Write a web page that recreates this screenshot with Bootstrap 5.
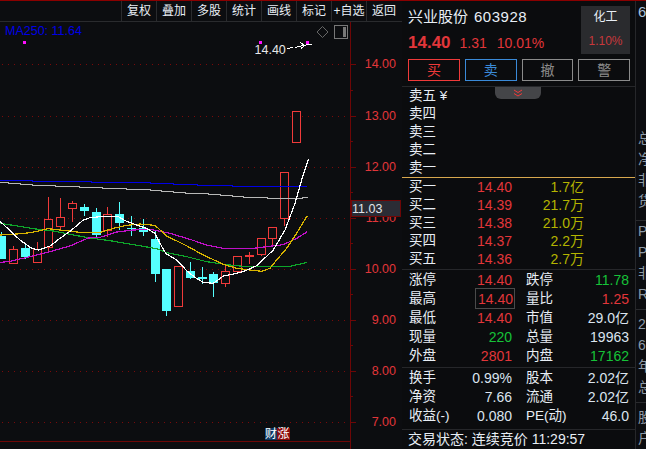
<!DOCTYPE html>
<html lang="zh">
<head>
<meta charset="utf-8">
<title>兴业股份</title>
<link href="https://cdn.jsdelivr.net/npm/bootstrap@5.3.0/dist/css/bootstrap.min.css" rel="stylesheet">
<style>
html,body{height:449px;overflow:hidden;background:#0c0d10;}
body{font-family:"Liberation Sans","Noto Sans CJK SC",sans-serif;font-size:14px;color:#e8eef5;line-height:1;}
.shell{width:646px;height:449px;border-top:1px solid #8b0000;}
.chart-col{width:402px;flex:none;}
.tool-strip{height:21px;border-bottom:1px solid #2a2b2e;padding-right:1px;}
.tool-cell{width:35px;height:20px;flex:none;border-left:1px solid #2a2b2e;color:#e8eef5;font-size:12px;white-space:nowrap;}
.canvas-box{height:427px;}
.canvas-box svg{display:block;}
.axis-txt{font-family:"Liberation Sans",sans-serif;font-size:12.5px;fill:#e2363a;}
.quote{width:234px;flex:none;border-right:1px solid #26272a;background:#0b0c0e;height:448px;}
.q-head{height:85px;padding:5px 5px 0 6px;}
.q-name{font-size:15px;margin-top:3px;height:16px;white-space:nowrap;}
.q-name b{font-weight:400;font-size:15px;margin-left:6px;letter-spacing:.5px;}
.q-price{margin-top:9px;height:18px;color:#e2363a;font-size:14px;white-space:nowrap;}
.q-price b{font-size:17px;font-weight:700;margin-right:9px;}
.q-price span{margin-right:10px;}
.sector{width:49px;height:48px;background:#2a2b2e;margin-left:auto;font-size:12px;padding-top:5px;}
.sector .pct{color:#c8383c;font-size:12px;margin-top:12px;}
.act-row{gap:5px;margin-top:5px;}
.act-btn{width:52px;height:22px;padding:0;border-radius:0;font-size:14px;line-height:18px;background:transparent;border:1px solid #8b8b8b;color:#8b8b8b;}
.act-btn.buy{border-color:#f03a3a;color:#f03a3a;}
.act-btn.sell{border-color:#3a8ad8;color:#3a8ad8;}
.rule-top{border-top:1px solid #26272a;}
.sell-block{height:92px;border-bottom:1px solid #d8a84e;font-size:13.5px;}
.pull-tab{position:absolute;left:93px;top:0;width:46px;height:12px;background:#444548;border-radius:0 0 6px 6px;}
.r18{height:18px;padding-left:7px;white-space:nowrap;}
.r19{height:19px;padding-left:7px;white-space:nowrap;}
.buy-block{height:91px;}
.st-block{height:98px;padding-bottom:2px;}
.ex-block{height:62px;}
.px{width:103px;flex:none;}
.px>span:first-child{font-size:13.5px;}
.vol{width:72px;text-align:right;color:#b4b400;flex:none;}
.second{margin-left:14px;}
.t-red{color:#e2363a;}
.t-green{color:#16c238;}
.t-plain{color:#dbe4ee;}
.hi-box{outline:1px solid #4a4a4a;padding:3px 1px 2px 2px;margin:-3px -2px -2px 0;}
.status{height:18px;padding:2px 0 0 6px;font-size:14px;white-space:nowrap;color:#e8eef5;}
.edge{width:10px;flex:none;overflow:hidden;color:#8c99a6;font-size:14px;padding-left:2px;}
.edge div{height:21px;line-height:21px;white-space:nowrap;}
.edge .lead-6{color:#a8c0d8;margin-bottom:106px;font-size:15px;}
.edge hr{margin:0;height:0;border:0;border-top:1px solid #2a2b2e;opacity:1;margin-left:-2px;}
.tag-pair{left:265px;top:406px;}
.tag-cai,.tag-zhang{font-size:12px;height:12px;}
.tag-cai{width:12px;background:#0f3a66;}
.tag-zhang{width:13px;background:#8b0b0b;}
</style>
</head>
<body>
<div class="shell d-flex">
  <div class="chart-col d-flex flex-column">
    <div class="tool-strip d-flex justify-content-end">
      <div class="tool-cell d-flex align-items-center justify-content-center">复权</div>
      <div class="tool-cell d-flex align-items-center justify-content-center">叠加</div>
      <div class="tool-cell d-flex align-items-center justify-content-center">多股</div>
      <div class="tool-cell d-flex align-items-center justify-content-center">统计</div>
      <div class="tool-cell d-flex align-items-center justify-content-center">画线</div>
      <div class="tool-cell d-flex align-items-center justify-content-center">标记</div>
      <div class="tool-cell d-flex align-items-center justify-content-center">+自选</div>
      <div class="tool-cell d-flex align-items-center justify-content-center">返回</div>
    </div>
    <div class="canvas-box position-relative">
      <svg width="402" height="427" viewBox="0 22 402 427" xmlns="http://www.w3.org/2000/svg">
        <g stroke="#7a0a0a" stroke-dasharray="1 5" shape-rendering="crispEdges">
          <path d="M2 64.5H350M2 116.5H350M2 167.5H350M2 218.5H350M2 269.5H350M2 320.5H350M2 371.5H350M2 422.5H350"/>
        </g>
        <g stroke="#6e0606" fill="none" shape-rendering="crispEdges">
          <path d="M350.5 22V449M0 441.5H350"/>
          <path d="M350 64.5H356M350 116.5H356M350 167.5H356M350 218.5H356M350 269.5H356M350 320.5H356M350 371.5H356M350 422.5H356"/>
          <path d="M350 90.5H353M350 141.5H353M350 192.5H353M350 243.5H353M350 294.5H353M350 345.5H353M350 396.5H353"/>
        </g>
        <text class="axis-txt" x="396" y="68" text-anchor="end">14.00</text>
        <text class="axis-txt" x="396" y="120" text-anchor="end">13.00</text>
        <text class="axis-txt" x="396" y="171" text-anchor="end">12.00</text>
        <text class="axis-txt" x="396" y="222" text-anchor="end">11.00</text>
        <text class="axis-txt" x="396" y="273" text-anchor="end">10.00</text>
        <text class="axis-txt" x="396" y="324" text-anchor="end">9.00</text>
        <text class="axis-txt" x="396" y="375" text-anchor="end">8.00</text>
        <text class="axis-txt" x="396" y="426" text-anchor="end">7.00</text>
        <rect x="351.5" y="200.5" width="49" height="16" fill="#2b2c35" stroke="#6e0606" shape-rendering="crispEdges"/>
        <text x="352" y="213" font-family="Liberation Sans" font-size="12.5" fill="#e0e4ea">11.03</text>

        <text x="5" y="35" font-family="Liberation Sans" font-size="12.5" fill="#0000e6">MA250: 11.64</text>

        <!-- wicks -->
        <g stroke="#f03a3a" fill="none" shape-rendering="crispEdges">
          <path d="M13.5 246V250M37.5 242V250M48.5 197V220M48.5 247V253M60.5 198V218M60.5 226V230M72.5 201V204M72.5 208V222M107.5 207V215M107.5 230V237M225.5 265V272M225.5 283V287M249.5 252V264M261.5 254V256M272.5 238V247M284.5 218V226"/>
        </g>
        <g stroke="#55ffff" fill="none" shape-rendering="crispEdges">
          <path d="M1.5 232V259M25.5 243V259M84.5 204V216M96.5 208V237M119.5 202V230M131.5 216V236M143.5 219V236M155.5 230V282M166.5 311V316M190.5 262V279M202.5 267V284M213.5 272V297"/>
        </g>
        <!-- filled falling bars -->
        <g fill="#55ffff" shape-rendering="crispEdges">
          <rect x="0" y="236" width="6" height="23"/>
          <rect x="21" y="248" width="9" height="9"/>
          <rect x="80" y="207" width="9" height="4"/>
          <rect x="92" y="212" width="9" height="23"/>
          <rect x="115" y="214" width="9" height="9"/>
          <rect x="127" y="228" width="9" height="1"/>
          <rect x="139" y="228" width="9" height="4"/>
          <rect x="151" y="239" width="9" height="35"/>
          <rect x="162" y="269" width="9" height="42"/>
          <rect x="186" y="271" width="9" height="7"/>
          <rect x="198" y="277" width="9" height="2"/>
          <rect x="209" y="274" width="9" height="9"/>
        </g>
        <!-- hollow rising bars -->
        <g fill="#0c0d10" stroke="#f03a3a" shape-rendering="crispEdges">
          <rect x="9.5" y="249.5" width="8" height="14"/>
          <rect x="33.5" y="249.5" width="8" height="13"/>
          <rect x="44.5" y="219.5" width="8" height="28"/>
          <rect x="56.5" y="217.5" width="8" height="9"/>
          <rect x="68.5" y="203.5" width="8" height="5"/>
          <rect x="103.5" y="214.5" width="8" height="16"/>
          <rect x="174.5" y="266.5" width="8" height="40"/>
          <rect x="221.5" y="271.5" width="8" height="12"/>
          <rect x="233.5" y="256.5" width="8" height="15"/>
          <rect x="257.5" y="238.5" width="8" height="16"/>
          <rect x="268.5" y="227.5" width="8" height="11"/>
          <rect x="280.5" y="172.5" width="8" height="46"/>
          <rect x="292.5" y="111.5" width="8" height="31"/>
        </g>
        <rect x="245" y="255" width="9" height="2" fill="#f03a3a"/>

        <!-- long moving averages, pixel aligned -->
        <g fill="none" shape-rendering="crispEdges">
          <path stroke="#0000e6" d="M0 180.5H32V181.5H91V182.5H150V183.5H173V184.5H197V185.500H232V186.500H307"/>
          <path stroke="#b8b8b8" d="M0 182.500H8V183.500H20V184.500H32V185.500H55V186.500H79V187.500H102V188.500H126V189.500H150V190.500H161V191.500H173V192.500H185V193.500H208V194.500H220V195.500H232V196.500H243V197.500H267V198.500H302V197.500H308"/>
        </g>
        <!-- short moving averages, plotted in 3x units -->
        <g transform="translate(0 150) scale(.33333)" fill="none" shape-rendering="crispEdges">
          <polyline stroke="#0ea52a" stroke-width="3.6" points="0,220 40,226 100,236 160,243 215,254 270,264 330,272 400,284 470,296 500,308 560,320 620,335 680,344 730,349 870,349 922,337"/>
          <polyline stroke="#c010c8" stroke-width="3.6" points="0,337 25,335 90,320 150,305 210,288 265,264 300,262 350,246 400,240 450,238 510,250 570,268 620,285 670,295 760,295 800,290 850,284 890,265 922,245"/>
          <polyline stroke="#d8b400" stroke-width="3.6" points="0,255 50,252 90,248 120,242 145,236 180,240 240,247 275,248 300,247 340,235 380,226 420,222 465,226 500,258 555,285 610,315 670,343 710,355 750,360 785,364 810,355 830,330 860,295 890,250 922,197"/>
          <polyline stroke="#ffffff" stroke-width="3.6" points="0,214 28,240 60,270 95,295 115,300 150,288 180,265 215,240 250,210 270,203 300,200 355,200 375,212 410,225 440,235 465,250 480,280 497,310 530,330 560,362 585,382 610,397 640,400 670,378 700,372 730,365 770,347 820,300 855,240 885,160 905,90 925,28"/>
        </g>

        <!-- high-price marker -->
        <g fill="#ff10ff" shape-rendering="crispEdges">
          <rect x="23" y="41" width="3" height="3"/>
          <rect x="259" y="41" width="3" height="3"/>
          <rect x="306" y="41" width="3" height="3"/>
        </g>
        <text x="254.500" y="54" font-family="Liberation Sans" font-size="12.5" fill="#e8e8e8">14.40</text>
        <path d="M287 48.500l6-1M295 47.500l8-2M303 45.500l9-1.500M300 42.500l5 3-4 3" stroke="#fff" fill="none" shape-rendering="crispEdges"/>
        <path d="M322.500 26.500l5.500 5.500-5.500 5.500-5.500-5.500z" stroke="#666" fill="none"/>
        <rect x="334.500" y="25.500" width="13" height="13" stroke="#777" fill="none" shape-rendering="crispEdges"/>
        <rect x="343" y="27" width="3" height="10" fill="#777"/>
      </svg>
      <div class="position-absolute d-flex tag-pair">
        <span class="tag-cai text-white d-flex align-items-center justify-content-center">财</span>
        <span class="tag-zhang text-white d-flex align-items-center justify-content-center">涨</span>
      </div>
    </div>
  </div>

  <div class="quote d-flex flex-column">
    <div class="q-head">
      <div class="d-flex">
        <div>
          <div class="q-name">兴业股份<b>603928</b></div>
          <div class="q-price"><b>14.40</b><span>1.31</span><span>10.01%</span></div>
        </div>
        <div class="sector text-center">
          <div>化工</div>
          <div class="pct">1.10%</div>
        </div>
      </div>
      <div class="act-row d-flex">
        <button class="btn act-btn buy">买</button>
        <button class="btn act-btn sell">卖</button>
        <button class="btn act-btn">撤</button>
        <button class="btn act-btn">警</button>
      </div>
    </div>
    <div class="sell-block rule-top position-relative">
      <div class="pull-tab d-flex align-items-center justify-content-center">
        <svg width="10" height="8" viewBox="0 0 10 8"><path d="M1 1l4 2.500 4-2.500M1 4.500l4 2.500 4-2.500" fill="none" stroke="#f03a3a"/></svg>
      </div>
      <div class="r18 d-flex align-items-center">卖五&nbsp;¥</div>
      <div class="r18 d-flex align-items-center">卖四</div>
      <div class="r18 d-flex align-items-center">卖三</div>
      <div class="r18 d-flex align-items-center">卖二</div>
      <div class="r18 d-flex align-items-center">卖一</div>
    </div>
    <div class="buy-block">
      <div class="r18 d-flex align-items-center"><div class="px d-flex justify-content-between"><span>买一</span><span class="t-red">14.40</span></div><div class="vol">1.7亿</div></div>
      <div class="r18 d-flex align-items-center"><div class="px d-flex justify-content-between"><span>买二</span><span class="t-red">14.39</span></div><div class="vol">21.7万</div></div>
      <div class="r18 d-flex align-items-center"><div class="px d-flex justify-content-between"><span>买三</span><span class="t-red">14.38</span></div><div class="vol">21.0万</div></div>
      <div class="r18 d-flex align-items-center"><div class="px d-flex justify-content-between"><span>买四</span><span class="t-red">14.37</span></div><div class="vol">2.2万</div></div>
      <div class="r18 d-flex align-items-center"><div class="px d-flex justify-content-between"><span>买五</span><span class="t-red">14.36</span></div><div class="vol">2.7万</div></div>
    </div>
    <div class="st-block rule-top">
      <div class="r19 d-flex align-items-center"><div class="px d-flex justify-content-between"><span>涨停</span><span class="t-red">14.40</span></div><div class="px second d-flex justify-content-between"><span>跌停</span><span class="t-green">11.78</span></div></div>
      <div class="r19 d-flex align-items-center"><div class="px d-flex justify-content-between"><span>最高</span><span class="t-red hi-box">14.40</span></div><div class="px second d-flex justify-content-between"><span>量比</span><span class="t-red">1.25</span></div></div>
      <div class="r19 d-flex align-items-center"><div class="px d-flex justify-content-between"><span>最低</span><span class="t-red">14.40</span></div><div class="px second d-flex justify-content-between"><span>市值</span><span class="t-plain">29.0亿</span></div></div>
      <div class="r19 d-flex align-items-center"><div class="px d-flex justify-content-between"><span>现量</span><span class="t-green">220</span></div><div class="px second d-flex justify-content-between"><span>总量</span><span class="t-plain">19963</span></div></div>
      <div class="r19 d-flex align-items-center"><div class="px d-flex justify-content-between"><span>外盘</span><span class="t-red">2801</span></div><div class="px second d-flex justify-content-between"><span>内盘</span><span class="t-green">17162</span></div></div>
    </div>
    <div class="ex-block rule-top">
      <div class="r19 d-flex align-items-center"><div class="px d-flex justify-content-between"><span>换手</span><span class="t-plain">0.99%</span></div><div class="px second d-flex justify-content-between"><span>股本</span><span class="t-plain">2.02亿</span></div></div>
      <div class="r19 d-flex align-items-center"><div class="px d-flex justify-content-between"><span>净资</span><span class="t-plain">7.66</span></div><div class="px second d-flex justify-content-between"><span>流通</span><span class="t-plain">2.02亿</span></div></div>
      <div class="r19 d-flex align-items-center"><div class="px d-flex justify-content-between"><span>收益(-)</span><span class="t-plain">0.080</span></div><div class="px second d-flex justify-content-between"><span>PE(动)</span><span class="t-plain">46.0</span></div></div>
    </div>
    <div class="status rule-top">交易状态: 连续竞价 11:29:57</div>
  </div>

  <div class="edge">
    <div class="lead-6">6</div>
    <div>总</div><div>净</div><div>非</div><div>货</div>
    <hr class="mt-2">
    <div>P</div><div>P</div><div>非</div><div>R</div>
    <hr class="mt-1 mb-1">
    <div>2</div><div>6</div><div>年</div><div>总</div>
    <hr class="mt-1 mb-1">
    <div>股</div><div>户</div>
  </div>
</div>
</body>
</html>
